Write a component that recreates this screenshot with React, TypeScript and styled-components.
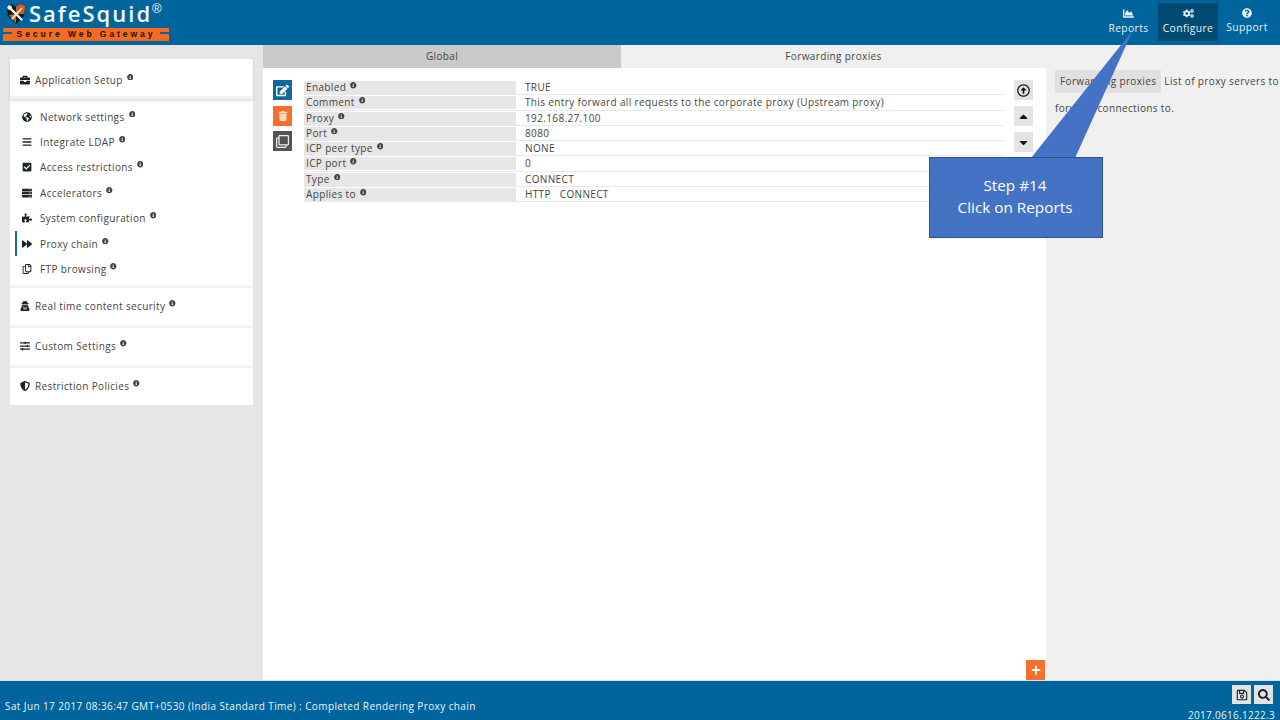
import React from "react";
import styled, { createGlobalStyle } from "styled-components";
import {
  FaBars,
  FaBriefcase,
  FaCaretDown,
  FaCaretUp,
  FaChartArea,
  FaCheckSquare,
  FaCogs,
  FaEdit,
  FaForward,
  FaGlobeAmericas,
  FaInfoCircle,
  FaPlus,
  FaPuzzlePiece,
  FaQuestionCircle,
  FaRegArrowAltCircleUp,
  FaRegClone,
  FaRegCopy,
  FaRegSave,
  FaSearch,
  FaServer,
  FaShieldAlt,
  FaSlidersH,
  FaTrash,
  FaUserSecret,
} from "react-icons/fa";

const GlobalStyle = createGlobalStyle`
  html, body, #root {
    margin: 0;
    height: 100%;
  }
  body {
    font-family: "Open Sans", "Liberation Sans", sans-serif;
    font-size: 10px;
    letter-spacing: 0.36px;
    color: #444;
    overflow: hidden;
  }
  * {
    box-sizing: border-box;
  }
`;

const Page = styled.div`
  position: relative;
  width: 1280px;
  height: 720px;
  display: flex;
  flex-direction: column;
`;

const Header = styled.header`
  height: 45px;
  flex: none;
  background: #00659c;
  display: flex;
  justify-content: space-between;
`;

const Logo = styled.div`
  width: 169px;
  padding: 0 0 0 3px;
`;

const LogoTop = styled.div`
  display: flex;
  align-items: flex-start;
  height: 28px;
  padding-left: 2px;
`;

const LogoName = styled.span`
  font-family: "Open Sans", sans-serif;
  font-weight: 600;
  font-size: 22px;
  line-height: 27px;
  letter-spacing: 2px;
  color: #f4f8fb;
  margin-left: 2px;
`;

const LogoMark = styled.span`
  font-family: "Liberation Sans", sans-serif;
  font-size: 13px;
  line-height: 18px;
  letter-spacing: 0;
  color: #f4f8fb;
`;

const LogoBar = styled.div`
  height: 13px;
  background: linear-gradient(#f26b21 0 4px, #00659c 4px 6px, #f26b21 6px);
  display: flex;
  justify-content: center;
`;

const LogoTag = styled.span`
  background: #f26b21;
  padding: 0 5px;
  font-family: "Liberation Sans", sans-serif;
  font-weight: 700;
  font-size: 8.5px;
  line-height: 13px;
  letter-spacing: 2.95px;
  color: #1b1206;
  white-space: nowrap;
`;

const TopNav = styled.nav`
  display: flex;
  align-items: flex-start;
  padding: 3px 4px 0 0;
`;

const TopItem = styled.a<{ $active?: boolean; $w: number }>`
  width: ${(p) => p.$w}px;
  height: 38px;
  padding-top: 5px;
  background: ${(p) => (p.$active ? "#004a73" : "transparent")};
  color: #eaf2f7;
  font-size: 10.3px;
  letter-spacing: 0.4px;
  line-height: 14px;
  display: flex;
  flex-direction: column;
  align-items: center;
  gap: 2px;
`;

const Body = styled.div`
  flex: 1;
  display: flex;
  min-height: 0;
`;

const Sidebar = styled.aside`
  width: 263px;
  flex: none;
  background: #e6e6e6;
  padding: 14px 10px 0;
`;

const MenuPanel = styled.div`
  background: #fff;
  display: flex;
  flex-direction: column;
`;

const MenuHead = styled.div<{ $open?: boolean; $h: number }>`
  height: ${(p) => p.$h}px;
  display: flex;
  align-items: center;
  padding: ${(p) => (p.$open ? "4px" : "0")} 0 0 10px;
  gap: 5px;
  border-bottom: 3px solid #f3f3f3;
  box-shadow: ${(p) => (p.$open ? "0 2px 3px rgba(0,0,0,0.14)" : "none")};
  &:last-child {
    border-bottom: 0;
  }
`;

const MenuList = styled.div`
  padding: 5px 0 3px;
  display: flex;
  flex-direction: column;
  border-bottom: 3px solid #f3f3f3;
`;

const MenuItem = styled.div<{ $active?: boolean }>`
  position: relative;
  height: 25.4px;
  display: flex;
  align-items: center;
  padding-left: 12px;
  gap: 8px;
  &::before {
    content: "";
    display: ${(p) => (p.$active ? "block" : "none")};
    position: absolute;
    left: 5px;
    top: 0;
    width: 2px;
    height: 25px;
    background: #1b6a8e;
  }
`;

const IconSlot = styled.span`
  width: 10px;
  display: flex;
  justify-content: center;
  color: #1a242c;
  font-size: 10px;
  flex: none;
`;

const Label = styled.span`
  display: inline-flex;
  white-space: nowrap;
`;

const Tip = styled(FaInfoCircle)`
  font-size: 6.5px;
  color: #444;
  margin: 0 0 0 4px;
  position: relative;
  top: 1px;
  flex: none;
`;

const Center = styled.main`
  width: 783px;
  flex: none;
  background: #fff;
  display: flex;
  flex-direction: column;
  position: relative;
`;

const Tabs = styled.div`
  height: 23px;
  flex: none;
  display: flex;
`;

const Tab = styled.div<{ $active?: boolean; $w: number }>`
  width: ${(p) => p.$w}px;
  background: ${(p) => (p.$active ? "#f0f0f0" : "#c9c9c9")};
  display: flex;
  align-items: center;
  justify-content: center;
  padding-bottom: 1px;
`;

const EntryRow = styled.section`
  display: flex;
  padding: 12px 13px 0 10px;
`;

const ActionColumn = styled.div`
  width: 19px;
  flex: none;
  display: flex;
  flex-direction: column;
  gap: 5.5px;
`;

const SquareButton = styled.button<{ $bg: string; $fg: string }>`
  width: 19px;
  height: 20px;
  border: 0;
  padding: 0;
  background: ${(p) => p.$bg};
  color: ${(p) => p.$fg};
  display: flex;
  align-items: center;
  justify-content: center;
  font-size: 13px;
`;

const Fields = styled.div`
  width: 700px;
  margin-left: 12px;
`;

const FieldRow = styled.div`
  height: 15.3px;
  display: flex;
  align-items: stretch;
  border-bottom: 1px solid #e8e8e8;
`;

const FieldName = styled.div`
  width: 212px;
  flex: none;
  background: #e6e6e6;
  padding-left: 2px;
  line-height: 13px;
  height: 13px;
  margin-top: 1px;
  display: flex;
`;

const FieldValue = styled.div`
  padding-left: 9px;
  line-height: 14px;
  white-space: pre;
`;

const MoveColumn = styled.div`
  width: 19px;
  margin-left: 10px;
  flex: none;
  display: flex;
  flex-direction: column;
  gap: 6px;
`;

const AddButton = styled(SquareButton)`
  position: absolute;
  right: 1px;
  bottom: 0;
  font-size: 10px;
`;

const Help = styled.aside`
  flex: 1;
  background: #f0f0f0;
  padding: 23px 0 0 9px;
  line-height: 27px;
  overflow: hidden;
`;

const HelpLine = styled.div`
  white-space: nowrap;
  height: 27px;
`;

const HelpTag = styled.span`
  display: inline-block;
  background: #e0e0e0;
  height: 23px;
  line-height: 23px;
  padding: 0 5px;
  margin-right: 3px;
`;

const Footer = styled.footer`
  height: 40px;
  flex: none;
  background: #00659c;
  border-top: 1px solid #d5e3ea;
  display: flex;
  justify-content: space-between;
  color: #eef4f8;
`;

const Status = styled.div`
  padding: 18px 0 0 5px;
  line-height: 14px;
  letter-spacing: 0.4px;
`;

const FooterRight = styled.div`
  display: flex;
  flex-direction: column;
  align-items: flex-end;
  padding: 4px 5px 0 0;
`;

const FooterTools = styled.div`
  display: flex;
  gap: 3px;
  margin-right: 2px;
`;

const ToolButton = styled.button`
  width: 19px;
  height: 19px;
  border: 0;
  padding: 0;
  background: #e3e3e3;
  color: #152230;
  display: flex;
  align-items: center;
  justify-content: center;
  font-size: 12px;
`;

const Version = styled.div`
  margin-top: 5px;
  line-height: 13px;
  letter-spacing: 0.3px;
`;

const Callout = styled.div`
  position: absolute;
  left: 929px;
  top: 157px;
  width: 174px;
  height: 81px;
  background: #4472c4;
  border: 1px solid #2f528f;
  color: #fff;
  font-family: "Open Sans", sans-serif;
  font-size: 15.3px;
  letter-spacing: 0;
  line-height: 22px;
  text-align: center;
  padding: 16px 2px 0 0;
`;

const CalloutTail = styled.svg`
  position: absolute;
  left: 1020px;
  top: 20px;
  width: 120px;
  height: 140px;
`;

const LogoShield = styled.svg`
  flex: none;
  width: 22px;
  height: 22px;
  margin-top: 3px;
`;

const Shield = () => (
  <LogoShield viewBox="0 0 24 24">
    <path d="M2 3 L7 1 L12 4 L17 1 L22 3 L21 14 L12 23 L3 14 Z" fill="#17181a" />
    <path d="M12 4 L17 1 L22 3 L21 12 L12 12 Z" fill="#c8611f" />
    <path d="M4 13 L12 12 L12 22 Z" fill="#c8611f" />
    <path d="M5 5 L18 18" stroke="#f2f2f2" strokeWidth="2.6" strokeLinecap="round" />
    <path d="M18 6 L8 17" stroke="#e4e4e4" strokeWidth="2" strokeLinecap="round" />
    <circle cx="5" cy="5" r="2.6" fill="#f2f2f2" />
  </LogoShield>
);

const menu = [
  { icon: <FaGlobeAmericas />, label: "Network settings" },
  { icon: <FaBars />, label: "Integrate LDAP" },
  { icon: <FaCheckSquare />, label: "Access restrictions" },
  { icon: <FaServer />, label: "Accelerators" },
  { icon: <FaPuzzlePiece />, label: "System configuration" },
  { icon: <FaForward />, label: "Proxy chain", active: true },
  { icon: <FaRegCopy />, label: "FTP browsing" },
];

const fields = [
  ["Enabled", "TRUE"],
  ["Comment", "This entry forward all requests to the corporate proxy (Upstream proxy)"],
  ["Proxy", "192.168.27.100"],
  ["Port", "8080"],
  ["ICP peer type", "NONE"],
  ["ICP port", "0"],
  ["Type", "CONNECT"],
  ["Applies to", "HTTP   CONNECT"],
];

export default function App() {
  return (
    <Page>
      <GlobalStyle />
      <Header>
        <Logo>
          <LogoTop>
            <Shield />
            <LogoName>SafeSquid</LogoName>
            <LogoMark>®</LogoMark>
          </LogoTop>
          <LogoBar>
            <LogoTag>Secure Web Gateway</LogoTag>
          </LogoBar>
        </Logo>
        <TopNav>
          <TopItem $w={59}>
            <FaChartArea size={11} />
            Reports
          </TopItem>
          <TopItem $w={60} $active>
            <FaCogs size={11} />
            Configure
          </TopItem>
          <TopItem $w={58}>
            <FaQuestionCircle size={10} />
            Support
          </TopItem>
        </TopNav>
      </Header>
      <Body>
        <Sidebar>
          <MenuPanel>
            <MenuHead $open $h={40}>
              <IconSlot><FaBriefcase /></IconSlot>
              <Label>Application Setup<Tip /></Label>
            </MenuHead>
            <MenuList>
              {menu.map((m) => (
                <MenuItem key={m.label} $active={m.active}>
                  <IconSlot>{m.icon}</IconSlot>
                  <Label>{m.label}<Tip /></Label>
                </MenuItem>
              ))}
            </MenuList>
            <MenuHead $h={40}>
              <IconSlot><FaUserSecret /></IconSlot>
              <Label>Real time content security<Tip /></Label>
            </MenuHead>
            <MenuHead $h={40}>
              <IconSlot><FaSlidersH /></IconSlot>
              <Label>Custom Settings<Tip /></Label>
            </MenuHead>
            <MenuHead $h={37}>
              <IconSlot><FaShieldAlt /></IconSlot>
              <Label>Restriction Policies<Tip /></Label>
            </MenuHead>
          </MenuPanel>
        </Sidebar>
        <Center>
          <Tabs>
            <Tab $w={358}>Global</Tab>
            <Tab $w={425} $active>Forwarding proxies</Tab>
          </Tabs>
          <EntryRow>
            <ActionColumn>
              <SquareButton $bg="#0f6a9b" $fg="#fff"><FaEdit /></SquareButton>
              <SquareButton $bg="#f4702e" $fg="#fbd9c6"><FaTrash size={10} /></SquareButton>
              <SquareButton $bg="#555" $fg="#eee"><FaRegClone /></SquareButton>
            </ActionColumn>
            <Fields>
              {fields.map(([name, value]) => (
                <FieldRow key={name}>
                  <FieldName>{name}<Tip /></FieldName>
                  <FieldValue>{value}</FieldValue>
                </FieldRow>
              ))}
            </Fields>
            <MoveColumn>
              <SquareButton $bg="#e3e3e3" $fg="#111"><FaRegArrowAltCircleUp /></SquareButton>
              <SquareButton $bg="#e3e3e3" $fg="#111"><FaCaretUp /></SquareButton>
              <SquareButton $bg="#e3e3e3" $fg="#111"><FaCaretDown /></SquareButton>
            </MoveColumn>
          </EntryRow>
          <AddButton $bg="#f4702e" $fg="#fff"><FaPlus /></AddButton>
        </Center>
        <Help>
          <HelpLine><HelpTag>Forwarding proxies</HelpTag>List of proxy servers to</HelpLine>
          <HelpLine>forward connections to.</HelpLine>
        </Help>
      </Body>
      <Footer>
        <Status>Sat Jun 17 2017 08:36:47 GMT+0530 (India Standard Time) : Completed Rendering Proxy chain</Status>
        <FooterRight>
          <FooterTools>
            <ToolButton><FaRegSave /></ToolButton>
            <ToolButton><FaSearch /></ToolButton>
          </FooterTools>
          <Version>2017.0616.1222.3</Version>
        </FooterRight>
      </Footer>
      <CalloutTail viewBox="0 0 120 140">
        <polygon points="11,138 55,138 113,10" fill="#4472c4" />
      </CalloutTail>
      <Callout>Step #14<br />Click on Reports</Callout>
    </Page>
  );
}
